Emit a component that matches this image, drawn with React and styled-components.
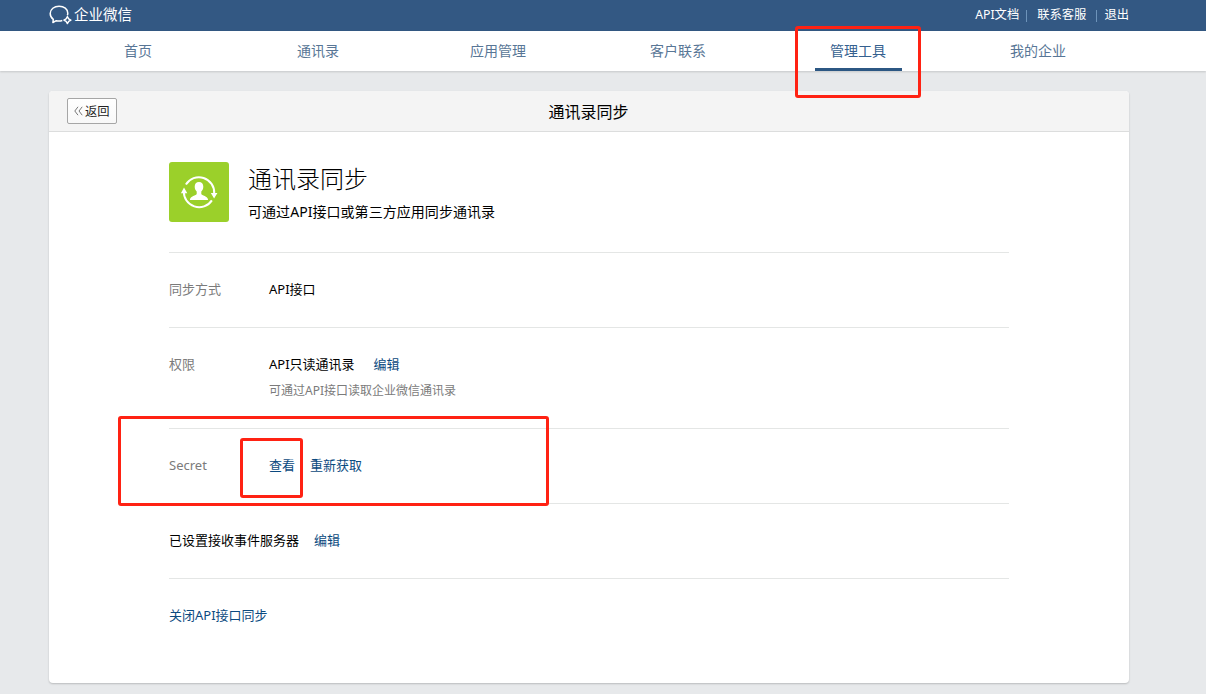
import React from 'react';
import styled, {createGlobalStyle} from 'styled-components';

const navItems = ['首页', '通讯录', '应用管理', '客户联系', '管理工具', '我的企业'];

const marks = [
    {left: 795, top: 26, width: 126, height: 72},
    {left: 118, top: 416, width: 431, height: 90},
    {left: 240, top: 438, width: 63, height: 60},
];

const LogoIcon = () => (
    <svg width="24" height="20" viewBox="0 0 24 20" fill="none" stroke="#fff">
        <path d="M18.300 10.300C18.700 9.600 18.800 8.900 18.800 8.200C18.800 4.200 15 1.200 10.100 1.200C5.200 1.200 1.200 4.200 1.200 8.400C1.200 10.800 2.400 12.900 4.300 14.300L3.900 17.500L7.300 15.700C9.300 16.300 11.400 16.200 13.300 15.500" strokeWidth="1.500" strokeLinejoin="round" />
        <path d="M18.400 11.600l1.300 2.200 2.200 1.300-2.200 1.300-1.300 2.200-1.300-2.200-2.200-1.300 2.200-1.300z" strokeWidth="1.400" strokeLinejoin="round" />
    </svg>
);

const SyncIcon = () => (
    <svg width="60" height="60" viewBox="0 0 60 60">
        <g fill="none" stroke="#fff" strokeWidth="2">
            <path d="M16.900 22.500A15.300 15.300 0 0 1 45.200 31.500" />
            <path d="M42.900 38.400A15.300 15.300 0 0 1 14.900 29" />
        </g>
        <path d="M11.900 31.200L15 25.600L18.300 31.200ZM41.800 31L48.400 31L45.100 36.500Z" fill="#fff" />
        <path d="M30 20c-2.800 0-4.300 1.900-4.300 4.700 0 2 .8 3.700 2 4.800v2.400c-.2 1.400-6.700 2.300-6.700 5.500v.6h18v-.6c0-3.200-6.500-4.100-6.700-5.500v-2.400c1.200-1.100 2-2.800 2-4.800 0-2.800-1.500-4.700-4.300-4.700z" fill="#fff" />
    </svg>
);

const App = () => {
    return (
        <Page>
            <GlobalStyle />
            <TopBar>
                <Container>
                    <Logo>
                        <LogoIcon />
                        <span>企业微信</span>
                    </Logo>
                    <TopLinks>
                        <TopLink>API文档</TopLink>
                        <Separator $left={7} $right={10} />
                        <TopLink>联系客服</TopLink>
                        <Separator $left={10} $right={7} />
                        <TopLink>退出</TopLink>
                    </TopLinks>
                </Container>
            </TopBar>
            <NavBar>
                <NavContainer>
                    {navItems.map((item) => (
                        <NavItem key={item}>
                            <NavLabel $active={item === '管理工具'}>{item}</NavLabel>
                        </NavItem>
                    ))}
                </NavContainer>
            </NavBar>

            <Card>
                <CardHeader>
                    <BackButton>
                        <svg width="9" height="10" viewBox="0 0 9 10" fill="none" stroke="#777">
                            <path d="M4 .8L.8 5L4 9.200M8.200 .8L5 5L8.200 9.200" />
                        </svg>
                        返回
                    </BackButton>
                    <CardTitle>通讯录同步</CardTitle>
                </CardHeader>
                <Content>
                    <Intro>
                        <AppIcon><SyncIcon /></AppIcon>
                        <IntroText>
                            <h1>通讯录同步</h1>
                            <p>可通过API接口或第三方应用同步通讯录</p>
                        </IntroText>
                    </Intro>
                    <Row>
                        <Label>同步方式</Label>
                        <span>API接口</span>
                    </Row>
                    <Row>
                        <Label>权限</Label>
                        <div>
                            <span>API只读通讯录</span>
                            <Link $gap={19}>编辑</Link>
                            <Hint>可通过API接口读取企业微信通讯录</Hint>
                        </div>
                    </Row>
                    <Row>
                        <Label>Secret</Label>
                        <Link>查看</Link>
                        <Link $gap={15}>重新获取</Link>
                    </Row>
                    <Row>
                        <span>已设置接收事件服务器</span>
                        <Link $gap={15}>编辑</Link>
                    </Row>
                    <Row>
                        <Link>关闭API接口同步</Link>
                    </Row>
                </Content>
            </Card>

            {marks.map((mark) => (
                <Mark key={mark.left} style={mark} />
            ))}
        </Page>
    )
}

export default App;

const GlobalStyle = createGlobalStyle`
body {
    margin: 0;
    background: #e7e9eb;
    font-family: "Noto Sans", "Noto Sans CJK SC", sans-serif;
    font-size: 13px;
    color: #000;
}

h1, p {
    margin: 0;
    font-weight: 400;
}
`;

const Page = styled.div`
position: relative;
height: 694px;
overflow: hidden;
`;

const Container = styled.div`
display: flex;
width: 1080px;
height: 100%;
margin-left: 49px;
`;

const NavContainer = styled(Container)`
margin-left: 48px;
`;

const TopBar = styled.header`
height: 31px;
background: #335883;
color: #fff;
`;

const Logo = styled.div`
display: flex;
align-items: center;
height: 30px;
font-size: 14.5px;
white-space: nowrap;

svg {
    margin: 0 1px 0 0;
}

span {
    line-height: 20px;
    padding-bottom: 3px;
}
`;

const TopLinks = styled.div`
display: flex;
align-items: center;
height: 30px;
margin-left: auto;
`;

const TopLink = styled.a`
font-size: 12.3px;
line-height: 18px;
white-space: nowrap;
`;

const Separator = styled.i`
width: 1px;
height: 12px;
margin: 1px ${({$right}) => $right}px 0 ${({$left}) => $left}px;
background: #6d93ba;
`;

const NavBar = styled.nav`
height: 40px;
background: #fff;
box-shadow: 0 1px 2px rgba(0, 0, 0, 0.15);
`;

const NavItem = styled.div`
display: flex;
justify-content: center;
width: 180px;
`;

const NavLabel = styled.a`
box-sizing: border-box;
width: 87px;
height: 40px;
border-bottom: 3px solid ${({$active}) => ($active ? '#2c5783' : 'transparent')};
color: ${({$active}) => ($active ? '#35608f' : '#587696')};
font-size: 14px;
line-height: 40px;
text-align: center;
`;

const Card = styled.main`
width: 1080px;
height: 592px;
margin: 20px 0 0 49px;
border-radius: 4px;
background: #fff;
box-shadow: 0 1px 2px rgba(0, 0, 0, 0.2);
overflow: hidden;
`;

const CardHeader = styled.div`
display: grid;
grid-template-columns: 50px 1fr 50px;
align-items: center;
box-sizing: border-box;
height: 41px;
padding: 0 19px 0 18px;
border-bottom: 1px solid #dcdddd;
background: #f4f4f4;
`;

const BackButton = styled.button`
display: flex;
align-items: center;
gap: 2px;
box-sizing: border-box;
width: 50px;
height: 26px;
padding: 0 0 0 6px;
border: 1px solid #a6a6a6;
border-radius: 2px;
background: linear-gradient(#fff, #f8f8f8);
color: #222;
font-family: inherit;
font-size: 12.3px;
white-space: nowrap;
`;

const CardTitle = styled.div`
font-size: 16px;
text-align: center;
`;

const Content = styled.div`
width: 840px;
margin: 0 auto;
`;

const Intro = styled.div`
display: flex;
height: 90px;
padding-top: 30px;
`;

const AppIcon = styled.div`
width: 60px;
height: 60px;
border-radius: 3px;
background: #9bd02a;
`;

const IntroText = styled.div`
margin-left: 19px;

h1 {
    font-size: 24px;
    font-weight: 300;
    line-height: 34px;
}

p {
    margin-top: 6px;
    font-size: 14px;
    line-height: 20px;
    letter-spacing: 0.05px;
}
`;

const Row = styled.div`
display: flex;
padding: 26px 0 28px;
border-top: 1px solid #e4e6e5;
line-height: 20px;
`;

const Label = styled.div`
width: 100px;
color: #7b7b7b;
`;

const Link = styled.a`
margin-left: ${({$gap}) => $gap || 0}px;
color: #0b4a80;
`;

const Hint = styled.p`
margin: 7px 0 -1px;
color: #7b7b7b;
font-size: 12px;
line-height: 20px;
`;

const Mark = styled.div`
position: absolute;
box-sizing: border-box;
border: 3px solid #ff2213;
border-radius: 3px;
pointer-events: none;
`;
